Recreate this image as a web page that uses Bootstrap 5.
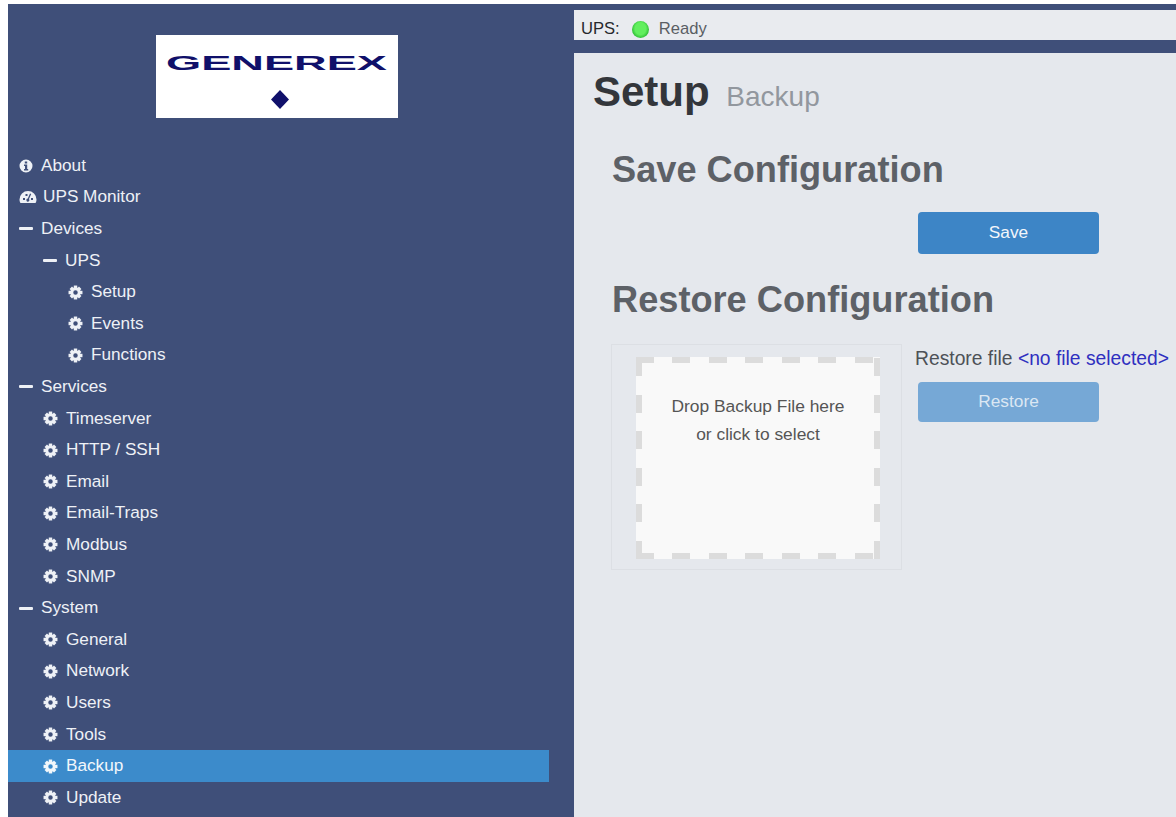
<!DOCTYPE html>
<html lang="en">
<head>
<meta charset="utf-8">
<title>Setup Backup</title>
<link href="https://cdn.jsdelivr.net/npm/bootstrap@5.3.0/dist/css/bootstrap.min.css" rel="stylesheet">
<style>
html,body{height:817px;overflow:hidden;background:#fff}
body{padding:4px 0 0 8px;font-family:"Liberation Sans",Arial,sans-serif;color:#333}
.shell{height:813px}
.side{width:566px;flex:none;background:#3f4f79;color:#eef1f6;font-size:17.2px}
.logo-box{width:242px;height:83px;margin:31px 0 32px 148px;background:#fff;display:block}
.side-list{margin:0;padding:0;list-style:none}
.side-row{height:31.6px;display:flex;align-items:center;padding-right:26px;width:541px}
.side-row.on{background:#3c8bcb;color:#f2f7fb;width:541px}
.lv0{padding-left:11px}
.lv1{padding-left:35px}
.lv2{padding-left:60px}
.ic{flex:none;margin-right:8px;fill:currentColor}
.ic-gear{width:15px;height:15px;margin-right:8px}
.ic-dash{width:14px;height:3px;background:currentColor;border-radius:1px;margin-right:8px;flex:none}
.right-col{background:#3f4f79;padding-top:6px;min-width:0}
.stat-bar{height:30px;background:#e9ebef;margin-bottom:13px;padding:8px 0 0 7px;font-size:16.6px;color:#5a5e64}
.stat-lbl{color:#26282c}
.led{width:17px;height:17px;border-radius:50%;margin:0 10px 0 12px;background:radial-gradient(ellipse at 50% 45%,#62ef5e 0 45%,#2fbf35 72%,#1d8f2a 100%)}
.main-pane{background:#e5e8ed;height:764px;padding:15px 0 0 19px}
.pg-title{font-size:42px;font-weight:700;color:#33363b;margin:0;line-height:47px}
.pg-sub{font-size:28px;font-weight:400;color:#92979e;margin-left:5px}
.sect{padding:1px 0 0 19px}
.sec-title{font-size:36.2px;font-weight:700;color:#5d6167;line-height:41px;margin:0;white-space:nowrap}
.act-btn{width:181px;height:42px;background:#3d85c6;border:0;border-radius:4px;color:#f2f6fb;font-size:17.3px;display:flex;align-items:center;justify-content:center;padding:0}
.act-btn.dim{height:40px;background:#76a8d6;color:#dbe7f3;opacity:1}
.save-row{margin:22px 0 0 306px}
.rest-title{margin-top:25px}
.rest-row{margin:24px 0 0 -1px}
.drop-out{width:291px;height:226px;border:1px solid #dcdfe4;padding:12px 0 0 24px;flex:none}
.drop-in{width:244px;height:202px;background-color:#f9f9f9;font-size:17.4px;color:#555;text-align:center;line-height:28px;padding-top:35px;
background-image:repeating-linear-gradient(90deg,#dcdcdc 0 18px,transparent 18px 36.5px),repeating-linear-gradient(90deg,#dcdcdc 0 18px,transparent 18px 36.5px),repeating-linear-gradient(0deg,#dcdcdc 0 18px,transparent 18px 36.5px),repeating-linear-gradient(0deg,#dcdcdc 0 18px,transparent 18px 36.5px);
background-repeat:no-repeat;background-size:100% 6px,100% 6px,6px 100%,6px 100%;background-position:0 0,0 100%,0 0,100% 0}
.rest-side{padding:5px 0 0 13px}
.rest-lbl{font-size:19.3px;line-height:20px;color:#4d5157;white-space:nowrap}
.rest-file{color:#2f2fc0}
.rest-btn{margin:13px 0 0 3px}
</style>
</head>
<body>
<svg width="0" height="0" class="position-absolute">
<defs>
<symbol id="gear" viewBox="0 0 14 14">
<path fill-rule="evenodd" d="M7 2.2a4.8 4.8 0 1 0 0 9.6 4.8 4.8 0 0 0 0-9.6zm0 2.7a2.1 2.1 0 1 1 0 4.2 2.1 2.1 0 0 1 0-4.2z"/>
<rect x="5.4" y=".5" width="3.2" height="2.6"/><rect x="5.4" y="10.9" width="3.2" height="2.6"/>
<rect x=".5" y="5.4" width="2.6" height="3.2"/><rect x="10.9" y="5.4" width="2.6" height="3.2"/>
<rect x="5.4" y=".8" width="3.2" height="2.6" transform="rotate(45 7 7)"/><rect x="5.4" y=".8" width="3.2" height="2.6" transform="rotate(135 7 7)"/>
<rect x="5.4" y=".8" width="3.2" height="2.6" transform="rotate(225 7 7)"/><rect x="5.4" y=".8" width="3.2" height="2.6" transform="rotate(315 7 7)"/>
</symbol>
</defs>
</svg>
<div class="d-flex shell">
<nav class="side">
<svg class="logo-box" viewBox="0 0 242 83" role="img" aria-label="Generex logo">
<text x="10" y="35" font-family="Liberation Sans, Arial, sans-serif" font-weight="700" font-size="21" fill="#10106a" textLength="221" lengthAdjust="spacingAndGlyphs">GENEREX</text>
<path d="M124 55l9 9.500-9 9.500-9-9.500z" fill="#10106a"/>
</svg>
<ul class="side-list">
<li class="side-row lv0"><svg class="ic" width="14" height="14" viewBox="0 0 14 14"><path fill-rule="evenodd" d="M7 .5a6.500 6.500 0 1 0 0 13 6.500 6.500 0 0 0 0-13zM5.800 2.600h2.400v2H5.800zM5 5.600h3.200v4.400h1v1.400H5V10h1V7H5z"/></svg><span>About</span></li>
<li class="side-row lv0"><svg class="ic" width="18" height="14" viewBox="0 0 18 14" style="margin-right:6px"><path fill-rule="evenodd" d="M9 1a8.500 8.500 0 0 0-8.500 8.500c0 1.500.4 2.900 1.100 3.500h14.800c.7-.6 1.100-2 1.100-3.500A8.500 8.500 0 0 0 9 1zM4 8h2v2H4zM6.500 4h2v2h-2zM12 8h2v2h-2zM11 3.500l1.200.6-2.200 5a1.500 1.500 0 1 1-1.200-.5z"/></svg><span>UPS Monitor</span></li>
<li class="side-row lv0"><span class="ic-dash"></span><span>Devices</span></li>
<li class="side-row lv1"><span class="ic-dash"></span><span>UPS</span></li>
<li class="side-row lv2"><svg class="ic ic-gear"><use href="#gear"/></svg><span>Setup</span></li>
<li class="side-row lv2"><svg class="ic ic-gear"><use href="#gear"/></svg><span>Events</span></li>
<li class="side-row lv2"><svg class="ic ic-gear"><use href="#gear"/></svg><span>Functions</span></li>
<li class="side-row lv0"><span class="ic-dash"></span><span>Services</span></li>
<li class="side-row lv1"><svg class="ic ic-gear"><use href="#gear"/></svg><span>Timeserver</span></li>
<li class="side-row lv1"><svg class="ic ic-gear"><use href="#gear"/></svg><span>HTTP / SSH</span></li>
<li class="side-row lv1"><svg class="ic ic-gear"><use href="#gear"/></svg><span>Email</span></li>
<li class="side-row lv1"><svg class="ic ic-gear"><use href="#gear"/></svg><span>Email-Traps</span></li>
<li class="side-row lv1"><svg class="ic ic-gear"><use href="#gear"/></svg><span>Modbus</span></li>
<li class="side-row lv1"><svg class="ic ic-gear"><use href="#gear"/></svg><span>SNMP</span></li>
<li class="side-row lv0"><span class="ic-dash"></span><span>System</span></li>
<li class="side-row lv1"><svg class="ic ic-gear"><use href="#gear"/></svg><span>General</span></li>
<li class="side-row lv1"><svg class="ic ic-gear"><use href="#gear"/></svg><span>Network</span></li>
<li class="side-row lv1"><svg class="ic ic-gear"><use href="#gear"/></svg><span>Users</span></li>
<li class="side-row lv1"><svg class="ic ic-gear"><use href="#gear"/></svg><span>Tools</span></li>
<li class="side-row lv1 on"><svg class="ic ic-gear"><use href="#gear"/></svg><span>Backup</span></li>
<li class="side-row lv1"><svg class="ic ic-gear"><use href="#gear"/></svg><span>Update</span></li>
</ul>
</nav>
<div class="right-col flex-grow-1">
<div class="stat-bar d-flex align-items-center"><span class="stat-lbl">UPS:</span><span class="led"></span><span>Ready</span></div>
<main class="main-pane">
<h1 class="pg-title">Setup <span class="pg-sub">Backup</span></h1>
<div class="sect">
<h2 class="sec-title mt-4 pt-1">Save Configuration</h2>
<div class="save-row"><button type="button" class="btn act-btn">Save</button></div>
<h2 class="sec-title rest-title">Restore Configuration</h2>
<div class="d-flex rest-row">
<div class="drop-out"><div class="drop-in">Drop Backup File here<br>or click to select</div></div>
<div class="rest-side">
<div class="rest-lbl">Restore file <span class="rest-file">&lt;no file selected&gt;</span></div>
<button type="button" class="btn act-btn dim rest-btn">Restore</button>
</div>
</div>
</div>
</main>
</div>
</div>
</body>
</html>
